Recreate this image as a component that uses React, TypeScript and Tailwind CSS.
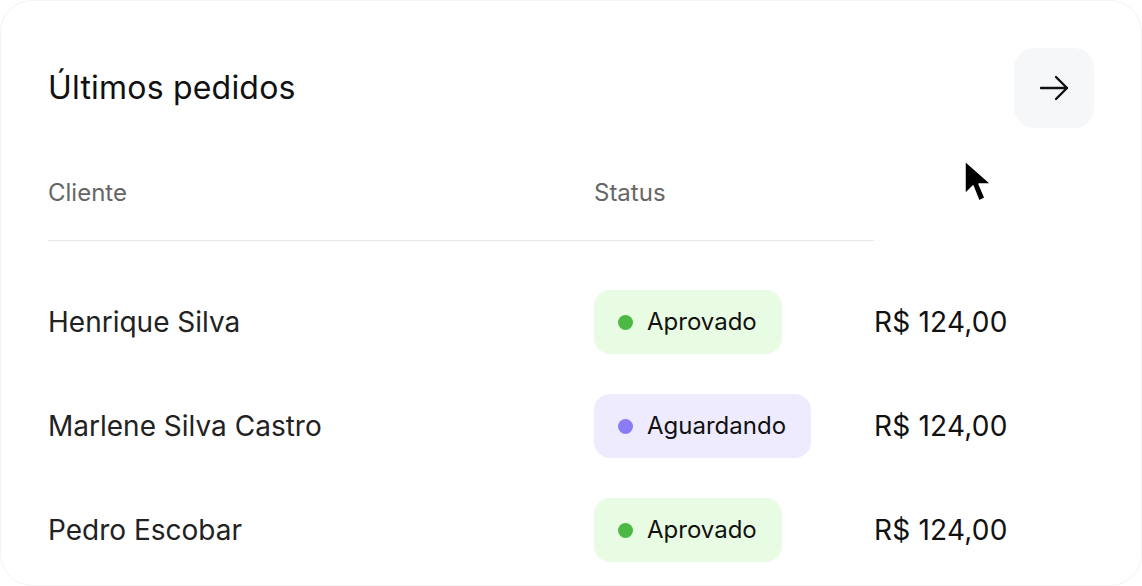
const orders = [
  { name: 'Henrique Silva', status: 'Aprovado', amount: 'R$ 124,00' },
  { name: 'Marlene Silva Castro', status: 'Aguardando', amount: 'R$ 124,00' },
  { name: 'Pedro Escobar', status: 'Aprovado', amount: 'R$ 124,00' },
]

const StatusBadge = ({ status }: { status: string }) => {
  const approved = status === 'Aprovado'
  return (
    <span
      className={`inline-flex items-center gap-[14px] h-16 pl-6 pr-[25px] rounded-2xl text-[24px] text-[#111] ${
        approved ? 'bg-[#e8fbe3]' : 'bg-[#efebfe]'
      }`}
    >
      <span className={`w-[15px] h-[15px] rounded-full ${approved ? 'bg-[#4cb944]' : 'bg-[#8b7cf6]'}`}></span>
      {status}
    </span>
  )
}

const App = () => {
  return (
    <div
      className="w-[1142px] h-[586px] bg-white overflow-hidden"
      style={{ fontFamily: 'Inter, "Noto Sans", sans-serif' }}
    >
      <div className="relative h-full rounded-[32px] border border-[#f3f3f3] bg-white pl-[47px] pr-[47px] pt-[47px]">
        <div className="flex items-center justify-between">
          <h2 className="text-[32px] font-normal text-[#111] tracking-[0.2px]">Últimos pedidos</h2>
          <button className="w-20 h-20 rounded-[20px] bg-[#f6f7f9] flex items-center justify-center text-[#111]">
            <svg width="30" height="26" viewBox="0 0 30 26" fill="none" stroke="currentColor" strokeWidth="2.4" strokeLinecap="round" strokeLinejoin="round">
              <path d="M2 13 H28 M17 2 L28 13 L17 24" />
            </svg>
          </button>
        </div>

        <div className="mt-[50px] w-[826px] grid grid-cols-[546px_280px] border-b border-[#e8e8e8] pb-[32px]">
          <span className="text-[24px] text-[#666] leading-[30px]">Cliente</span>
          <span className="text-[24px] text-[#666] leading-[30px]">Status</span>
        </div>

        <div className="mt-[49px] flex flex-col gap-10">
          {orders.map((order, i) => (
            <div key={i} className="grid grid-cols-[546px_280px_auto] items-center h-16">
              <span className="text-[28px] text-[#222]">{order.name}</span>
              <div>
                <StatusBadge status={order.status} />
              </div>
              <span className="text-[28px] text-[#111] tracking-[0.2px]">{order.amount}</span>
            </div>
          ))}
        </div>

        <svg
          className="absolute left-[962px] top-[158px]"
          width="30"
          height="44"
          viewBox="0 0 30 44"
        >
          <path d="M2 2 L2 35 L10 27 L16 42 L22 39 L16 25 L28 25 Z" fill="#000" stroke="#fff" strokeWidth="1.5" strokeLinejoin="round" />
        </svg>
      </div>
    </div>
  )
}

export default App
